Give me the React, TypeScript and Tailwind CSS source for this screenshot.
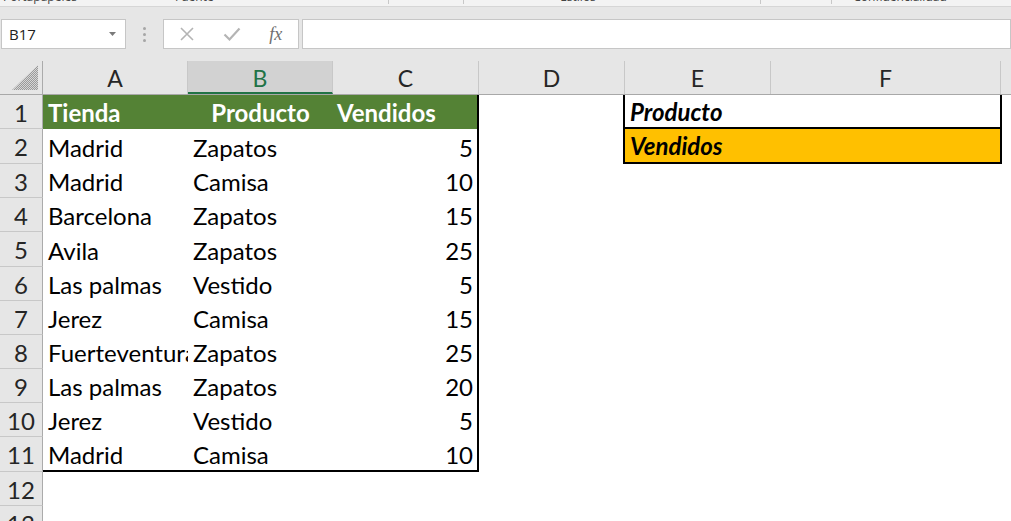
import React from "react";

const rowHeights = [34, 35, 34, 34, 35, 34, 34, 34, 34, 34, 35, 34, 34];

const data: [string, string, string][] = [
  ["Madrid", "Zapatos", "5"],
  ["Madrid", "Camisa", "10"],
  ["Barcelona", "Zapatos", "15"],
  ["Avila", "Zapatos", "25"],
  ["Las palmas", "Vestido", "5"],
  ["Jerez", "Camisa", "15"],
  ["Fuerteventura", "Zapatos", "25"],
  ["Las palmas", "Zapatos", "20"],
  ["Jerez", "Vestido", "5"],
  ["Madrid", "Camisa", "10"],
];

const cellFont = { fontFamily: "Lato, 'Open Sans', sans-serif" };

function Corner() {
  return (
    <svg width="27" height="26" viewBox="0 0 27 26">
      <defs>
        <pattern id="chk" width="2" height="2" patternUnits="userSpaceOnUse">
          <rect width="2" height="2" fill="#d6d6d6" />
          <rect width="1" height="1" fill="#9a9a9a" />
          <rect x="1" y="1" width="1" height="1" fill="#9a9a9a" />
        </pattern>
      </defs>
      <polygon points="26,0 26,25 0,25" fill="url(#chk)" />
    </svg>
  );
}

function RowHeader({ n, h }: { n: number; h: number }) {
  return (
    <div
      className={`${h === 35 ? "h-[35px]" : "h-[34px]"} w-[43px] shrink-0 bg-[#e6e6e6] border-r border-b border-r-[#ababab] border-b-[#c8c8c8] flex items-center justify-center text-[24px] text-[#262626] leading-none pt-[2px]`}
      style={cellFont}
    >
      {n}
    </div>
  );
}

export default function App() {
  return (
    <div className="w-[1011px] h-[521px] overflow-hidden bg-white relative">
      {/* ribbon remnants */}
      <div className="h-[7px] bg-[#f3f3f3] border-b border-[#d6d6d6] overflow-hidden flex text-[12px] text-[#444]" style={{ fontFamily: "'Open Sans', sans-serif" }}>
        <div className="w-[111px] h-[4px] border-r border-[#c8c8c8] pl-[3px] leading-[12px] -mt-[9px] pt-0 whitespace-nowrap">Portapapeles</div>
        <div className="w-[187px] h-[4px] border-r border-[#c8c8c8] pl-[64px] leading-[12px] -mt-[9px] whitespace-nowrap">Fuente</div>
        <div className="w-[91px] h-[4px] border-r border-[#c8c8c8]"></div>
        <div className="w-[75px] h-[4px] border-r border-[#c8c8c8]"></div>
        <div className="w-[229px] h-[4px] border-r border-[#c8c8c8] text-center leading-[12px] -mt-[9px] whitespace-nowrap">Estilos</div>
        <div className="w-[68px] h-[4px] border-r border-[#c8c8c8]"></div>
        <div className="w-[71px] h-[4px] border-r border-[#c8c8c8]"></div>
        <div className="w-[137px] h-[4px] border-r border-[#c8c8c8] text-center leading-[12px] -mt-[9px] whitespace-nowrap">Confidencialidad</div>
      </div>

      {/* formula bar area */}
      <div className="bg-[#e6e6e6] pt-[12px] pb-[12px] flex h-[54px]">
        <div
          className="ml-[1px] w-[127px] h-[30px] bg-white border border-[#c6c6c6] flex items-center justify-between pl-[7px] pr-[9px] text-[15px] text-[#222]"
          style={{ fontFamily: "'Open Sans', sans-serif" }}
        >
          <span>B17</span>
          <svg width="7" height="4" viewBox="0 0 7 4">
            <polygon points="0,0 7,0 3.5,4" fill="#7a7a7a" />
          </svg>
        </div>
        <div className="w-[37px] h-[30px] flex flex-col items-center justify-center gap-[3px]">
          <div className="w-[3px] h-[3px] rounded-full bg-[#a6a6a6]" />
          <div className="w-[3px] h-[3px] rounded-full bg-[#a6a6a6]" />
          <div className="w-[3px] h-[3px] rounded-full bg-[#a6a6a6]" />
        </div>
        <div className="w-[137px] h-[30px] bg-white border border-[#c6c6c6] flex items-center">
          <div className="w-[46px] flex justify-center">
            <svg width="16" height="16" viewBox="0 0 16 16">
              <path d="M2 2 L14 14 M14 2 L2 14" stroke="#b4b4b4" strokeWidth="1.6" fill="none" />
            </svg>
          </div>
          <div className="w-[44px] flex justify-center">
            <svg width="18" height="16" viewBox="0 0 18 16">
              <path d="M1.5 8.5 L6.5 13.5 L16.5 2.5" stroke="#b4b4b4" strokeWidth="2.2" fill="none" />
            </svg>
          </div>
          <div
            className="w-[44px] flex justify-center italic text-[18px] text-[#6e6e6e] leading-none"
            style={{ fontFamily: "'Liberation Serif', serif" }}
          >
            fx
          </div>
        </div>
        <div className="ml-[3px] w-[720px] h-[30px] bg-white border border-[#c6c6c6]" />
      </div>

      {/* column headers */}
      <div className="flex h-[34px] bg-[#e6e6e6] border-b border-[#a8a8a8] text-[23px] text-[#262626] leading-none" style={cellFont}>
        <div className="w-[43px] shrink-0 border-r border-[#ababab] flex items-end justify-end pr-[3px] pb-[3px]">
          <Corner />
        </div>
        <div className="w-[145px] shrink-0 border-r border-[#c8c8c8] flex items-center justify-center pt-[2px]">A</div>
        <div className="w-[145px] shrink-0 border-r border-[#c8c8c8] bg-[#d2d2d2] border-b-2 border-b-[#217346] flex items-center justify-center pt-[4px] text-[#217346]">B</div>
        <div className="w-[146px] shrink-0 border-r border-[#c8c8c8] flex items-center justify-center pt-[2px]">C</div>
        <div className="w-[146px] shrink-0 border-r border-[#c8c8c8] flex items-center justify-center pt-[2px]">D</div>
        <div className="w-[146px] shrink-0 border-r border-[#c8c8c8] flex items-center justify-center pt-[2px]">E</div>
        <div className="w-[230px] shrink-0 border-r border-[#c8c8c8] flex items-center justify-center pt-[2px]">F</div>
        <div className="flex-1" />
      </div>

      {/* rows */}
      <div className="flex flex-col text-[24px] leading-none text-black" style={cellFont}>
        {rowHeights.map((h, i) => {
          const n = i + 1;
          const hc = h === 35 ? "h-[35px]" : "h-[34px]";
          const isHead = n === 1;
          const d = n >= 2 && n <= 11 ? data[n - 2] : null;
          const inTable = n <= 11;
          const last = n === 11;
          return (
            <div key={n} className={`flex ${hc}`}>
              <RowHeader n={n} h={h} />
              {isHead ? (
                <div className="flex bg-[#548235] text-white font-bold border-r-2 border-black">
                  <div className="w-[145px] flex items-center pl-[5px] pt-[1px]">Tienda</div>
                  <div className="w-[145px] flex items-center justify-center pt-[1px]">Producto</div>
                  <div className="w-[144px] flex items-center pl-[4px] pt-[1px]">Vendidos</div>
                </div>
              ) : inTable && d ? (
                <div className={`flex border-r-2 border-black ${last ? "border-b-2" : ""}`}>
                  <div className="w-[145px] flex items-center pl-[5px] pt-[2px] overflow-hidden whitespace-nowrap">{d[0]}</div>
                  <div className="w-[145px] flex items-center pl-[5px] pt-[2px] whitespace-nowrap">{d[1]}</div>
                  <div className="w-[144px] flex items-center justify-end pr-[4px] pt-[2px]">{d[2]}</div>
                </div>
              ) : (
                <div className="w-[436px]" />
              )}
              <div className="w-[144px] shrink-0" />
              {n === 1 ? (
                <div className="flex border-x-2 border-b-2 border-black font-bold italic">
                  <div className="w-[146px] flex items-center pl-[5px] pt-[1px]">Producto</div>
                  <div className="w-[229px]" />
                </div>
              ) : n === 2 ? (
                <div className="flex border-x-2 border-b-2 border-black font-bold italic bg-[#ffc000]">
                  <div className="w-[146px] flex items-center pl-[5px] pt-[1px]">Vendidos</div>
                  <div className="w-[229px]" />
                </div>
              ) : null}
            </div>
          );
        })}
      </div>
    </div>
  );
}
